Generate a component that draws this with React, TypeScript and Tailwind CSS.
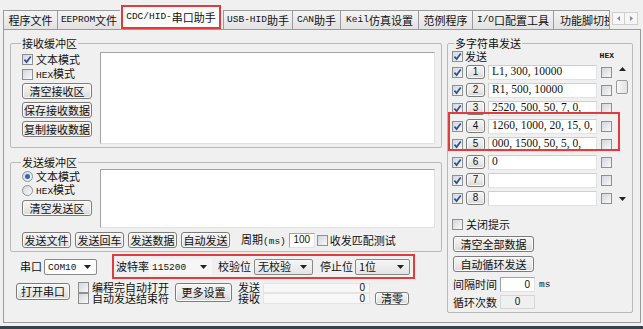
import React from "react";

// small latin text in the old bitmap-ish look
function L({ children, className = "" }: { children: React.ReactNode; className?: string }) {
  return <span className={`font-['Liberation_Mono',monospace] text-[9.5px] ${className}`}>{children}</span>;
}

function Check({ on = false, className = "" }: { on?: boolean; className?: string }) {
  return (
    <span
      className={`w-[11px] h-[11px] shrink-0 border border-[#8e8f8f] bg-linear-to-br from-[#d3d7dd] to-[#f8f8f8] flex items-center justify-center ${className}`}
    >
      {on && (
        <svg width="9" height="9" viewBox="0 0 9 9">
          <path d="M1.4 4.6 L3.6 7.1 L7.7 1.5" fill="none" stroke="#2b4f99" strokeWidth="1.7" />
        </svg>
      )}
    </span>
  );
}

function Radio({ on = false }: { on?: boolean }) {
  return (
    <span className="w-[11px] h-[11px] shrink-0 rounded-full border border-[#8e8f8f] bg-linear-to-br from-[#d3d7dd] to-[#fafafa] flex items-center justify-center">
      {on && <span className="w-[5px] h-[5px] rounded-full bg-[#2f63c4]" />}
    </span>
  );
}

function Btn({ children, className = "" }: { children: React.ReactNode; className?: string }) {
  return (
    <button
      className={`shrink-0 flex items-center justify-center border border-[#7c7c7c] rounded-[3px] bg-linear-to-b from-[#f5f5f5] via-[#ebebeb] to-[#d9d9d9] shadow-[inset_0_0_0_1px_#fbfbfb] leading-none text-[11px] text-[#111] ${className}`}
    >
      {children}
    </button>
  );
}

function Arrow() {
  return (
    <svg width="7" height="4" viewBox="0 0 7 4" className="shrink-0">
      <path d="M0 0 H7 L3.5 4 Z" fill="#222" />
    </svg>
  );
}

function Combo({ children, className = "", flat = false }: { children: React.ReactNode; className?: string; flat?: boolean }) {
  return (
    <div
      className={`shrink-0 h-[16px] flex items-center pl-[3px] pr-[5px] ${
        flat ? "bg-[#f6f6f6]" : "bg-linear-to-b from-[#f6f6f6] to-[#e4e4e4] border border-[#8a8a8a] rounded-[2px]"
      } ${className}`}
    >
      <span className="flex-1 leading-none">{children}</span>
      <Arrow />
    </div>
  );
}

function Tab({ children, className = "" }: { children: React.ReactNode; className?: string }) {
  return (
    <div
      className={`h-[19px] shrink-0 border-t border-l border-[#9b9b9b] bg-linear-to-b from-[#f4f4f4] to-[#e2e2e2] flex items-center justify-center leading-none ${className}`}
    >
      {children}
    </div>
  );
}

function Tabs() {
  return (
    <div className="h-[29px] shrink-0 flex items-end pl-[3px]">
      <Tab className="w-[54px]">程序文件</Tab>
      <Tab className="w-[63px]">
        <L>EEPROM</L>文件
      </Tab>
      <div className="ml-[1px] mr-[2px] w-[100px] h-[24px] shrink-0 border-2 border-[#e23b3b] bg-[#fbfbfb] flex items-center justify-center leading-none">
        <L>CDC/HID-</L>串口助手
      </div>
      <Tab className="w-[69px]">
        <L>USB-HID</L>助手
      </Tab>
      <Tab className="w-[48px]">
        <L>CAN</L>助手
      </Tab>
      <Tab className="w-[78px]">
        <L>Keil</L>仿真设置
      </Tab>
      <Tab className="w-[54px]">范例程序</Tab>
      <Tab className="w-[81px]">
        <L>I/O</L>口配置工具
      </Tab>
      <Tab className="w-[57px] border-r justify-start pl-[6px] overflow-hidden whitespace-nowrap">功能脚切换</Tab>
      <div className="ml-[2px] mb-[4px] flex">
        <div className="w-[13px] h-[13px] border border-[#cfcfcf] bg-[#f7f7f7] flex items-center justify-center">
          <svg width="3" height="5" viewBox="0 0 3 5">
            <path d="M3 0 V5 L0 2.5 Z" fill="#7d8aa6" />
          </svg>
        </div>
        <div className="w-[13px] h-[13px] border border-l-0 border-[#cfcfcf] bg-[#f7f7f7] flex items-center justify-center">
          <svg width="3" height="5" viewBox="0 0 3 5">
            <path d="M0 0 V5 L3 2.5 Z" fill="#7d8aa6" />
          </svg>
        </div>
      </div>
    </div>
  );
}

const box = "bg-white border border-t-[#a3a3a3] border-l-[#a3a3a3] border-r-[#e2e2e2] border-b-[#e2e2e2]";

function ReceiveGroup() {
  return (
    <fieldset className="border border-[#b9b9b9] rounded-[2px]">
      <legend className="ml-[10px] px-[1px] leading-[11px]">接收缓冲区</legend>
      <div className="flex pb-[3px] pr-[6px]">
        <div className="w-[89px] pl-[11px] flex flex-col">
          <div className="mt-[3px] h-[15px] flex items-center gap-[3px]">
            <Check on />
            <span>文本模式</span>
          </div>
          <div className="h-[15px] flex items-center gap-[3px]">
            <Check />
            <span>
              <L>HEX</L>模式
            </span>
          </div>
          <Btn className="mt-[1px] w-[70px] h-[16px]">清空接收区</Btn>
          <Btn className="mt-[3px] w-[70px] h-[16px]">保存接收数据</Btn>
          <Btn className="mt-[3px] w-[70px] h-[16px]">复制接收数据</Btn>
        </div>
        <div className={`mt-[3px] w-[335px] h-[92px] ${box}`} />
      </div>
    </fieldset>
  );
}

function SendGroup() {
  return (
    <fieldset className="mt-[9px] border border-[#b9b9b9] rounded-[2px]">
      <legend className="ml-[10px] px-[1px] leading-[11px]">发送缓冲区</legend>
      <div className="flex flex-col pb-[3px]">
        <div className="flex pr-[6px]">
          <div className="w-[89px] pl-[11px] flex flex-col">
            <div className="mt-[1px] h-[14px] flex items-center gap-[3px]">
              <Radio on />
              <span>文本模式</span>
            </div>
            <div className="h-[14px] flex items-center gap-[3px]">
              <Radio />
              <span>
                <L>HEX</L>模式
              </span>
            </div>
            <Btn className="mt-[3px] w-[70px] h-[16px]">清空发送区</Btn>
          </div>
          <div className={`mt-[1px] w-[335px] h-[59px] ${box}`} />
        </div>
        <div className="mt-[4px] h-[16px] pl-[11px] flex items-center">
          <Btn className="w-[49px] h-[16px]">发送文件</Btn>
          <Btn className="ml-[4px] w-[49px] h-[16px]">发送回车</Btn>
          <Btn className="ml-[4px] w-[49px] h-[16px]">发送数据</Btn>
          <Btn className="ml-[4px] w-[49px] h-[16px]">自动发送</Btn>
          <span className="ml-[11px]">
            周期<L className="text-[8.5px]">(ms)</L>
          </span>
          <div className={`ml-[3px] w-[26px] h-[15px] flex items-center justify-center ${box}`}>
            <span className="font-['Liberation_Sans',sans-serif] text-[10px] leading-none">100</span>
          </div>
          <Check className="ml-[2px]" />
          <span className="ml-[2px]">收发匹配测试</span>
        </div>
      </div>
    </fieldset>
  );
}

function PortRows() {
  return (
    <div className="flex flex-col">
      <div className="mt-[2px] h-[25px] flex items-center">
        <span className="ml-[10px]">串口</span>
        <Combo className="ml-[2px] w-[53px] bg-none bg-white">
          <L>COM10</L>
        </Combo>
        <div className="ml-[15px] w-[303px] h-[25px] shrink-0 border-2 border-[#e23b3b] flex items-center pl-[2px]">
          <span>波特率</span>
          <Combo flat className="w-[63px]">
            <L>115200</L>
          </Combo>
          <span className="ml-[6px]">校验位</span>
          <Combo className="ml-[3px] w-[59px]">无校验</Combo>
          <span className="ml-[7px]">停止位</span>
          <Combo className="ml-[2px] w-[55px]">1位</Combo>
        </div>
      </div>
      <div className="mt-[3px] flex items-start">
        <Btn className="ml-[6px] mt-[1px] w-[54px] h-[17px]">打开串口</Btn>
        <div className="ml-[8px] flex flex-col">
          <div className="h-[11px] flex items-center gap-[3px]">
            <Check className="w-[10px] h-[10px]" />
            <span className="leading-[11px]">编程完自动打开</span>
          </div>
          <div className="h-[11px] flex items-center gap-[3px]">
            <Check className="w-[10px] h-[10px]" />
            <span className="leading-[11px]">自动发送结束符</span>
          </div>
        </div>
        <Btn className="ml-[6px] mt-[1px] w-[57px] h-[19px]">更多设置</Btn>
        <div className="ml-[6px] flex flex-col">
          <div className="h-[11px] flex items-center">
            <span className="w-[25px] leading-[11px]">发送</span>
            <div className="w-[107px] h-[10px] bg-[#f7f7f7] border border-[#e4e4e4] flex items-center justify-end pr-[4px]">
              <span className="font-['Liberation_Sans',sans-serif] text-[10px] leading-none">0</span>
            </div>
          </div>
          <div className="h-[11px] flex items-center">
            <span className="w-[25px] leading-[11px]">接收</span>
            <div className="w-[107px] h-[11px] bg-[#f7f7f7] border border-[#e4e4e4] flex items-center justify-end pr-[4px]">
              <span className="font-['Liberation_Sans',sans-serif] text-[10px] leading-none">0</span>
            </div>
            <Btn className="ml-[5px] w-[34px] h-[13px]">清零</Btn>
          </div>
        </div>
      </div>
    </div>
  );
}

const strings = [
  "L1, 300, 10000",
  "R1, 500, 10000",
  "2520, 500, 50, 7, 0,",
  "1260, 1000, 20, 15, 0,",
  "000, 1500, 50, 5, 0,",
  "0",
  "",
  "",
];

function MultiGroup() {
  return (
    <fieldset className="ml-[5px] w-[186px] self-start border border-[#b9b9b9] rounded-[2px]">
      <legend className="ml-[6px] px-[1px] leading-[11px]">多字符串发送</legend>
      <div className="flex flex-col pb-[3px]">
        <div className="mt-[1px] h-[12px] pl-[4px] pr-[18px] flex items-center">
          <Check on />
          <span className="ml-[2px] leading-[11px]">发送</span>
          <span className="ml-auto font-['Liberation_Mono',monospace] font-bold text-[8px] leading-none">HEX</span>
        </div>
        <div className="relative mt-[1px] pl-[4px] flex">
          <div className="flex flex-col">
            {strings.map((s, i) => (
              <div key={i} className="h-[18px] flex items-center">
                <Check on />
                <Btn className="ml-[3px] w-[19px] h-[14px]">
                  <span className="font-['Liberation_Sans',sans-serif] text-[10px]">{i + 1}</span>
                </Btn>
                <div className={`ml-[3px] w-[109px] h-[15px] flex items-center pl-[3px] ${box} border-t-[#cfcfcf] border-l-[#cfcfcf]`}>
                  <span className="font-['Liberation_Serif',serif] text-[11.5px] leading-none whitespace-nowrap">{s}</span>
                </div>
                <Check className="ml-[4px]" />
              </div>
            ))}
          </div>
          <div className="ml-[4px] w-[12px] h-[144px] flex flex-col items-center">
            <svg width="7" height="4" viewBox="0 0 7 4" className="mt-[4px]">
              <path d="M0 4 H7 L3.5 0 Z" fill="#222" />
            </svg>
            <div className="mt-[9px] w-[12px] h-[14px] border border-[#9a9a9a] rounded-[2px] bg-linear-to-r from-[#f6f6f6] to-[#e2e2e2]" />
            <div className="flex-1" />
            <svg width="7" height="4" viewBox="0 0 7 4" className="mb-[6px]">
              <path d="M0 0 H7 L3.5 4 Z" fill="#222" />
            </svg>
          </div>
          <div className="absolute left-0 top-[49px] w-[172px] h-[39px] border-2 border-[#e23b3b] pointer-events-none" />
        </div>
        <div className="mt-[11px] h-[12px] pl-[4px] flex items-center gap-[3px]">
          <Check />
          <span>关闭提示</span>
        </div>
        <Btn className="ml-[5px] mt-[6px] w-[81px] h-[16px]">清空全部数据</Btn>
        <Btn className="ml-[5px] mt-[4px] w-[81px] h-[16px]">自动循环发送</Btn>
        <div className="mt-[5px] h-[15px] pl-[5px] flex items-center">
          <span className="w-[44px]">间隔时间</span>
          <div className={`ml-[3px] w-[35px] h-[15px] flex items-center justify-end pr-[4px] ${box}`}>
            <span className="font-['Liberation_Sans',sans-serif] text-[10px] leading-none">0</span>
          </div>
          <L className="ml-[4px] text-[8.5px]">ms</L>
        </div>
        <div className="mt-[3px] h-[14px] pl-[5px] flex items-center">
          <span className="w-[44px]">循环次数</span>
          <div className="ml-[3px] w-[35px] h-[14px] flex items-center justify-center bg-[#f0f0f0] border border-[#d6d6d6]">
            <span className="font-['Liberation_Sans',sans-serif] text-[10px] leading-none">0</span>
          </div>
        </div>
      </div>
    </fieldset>
  );
}

export default function App() {
  return (
    <div className="w-[643px] h-[329px] bg-[#f0f0f0] overflow-hidden flex flex-col text-[11px] leading-[13px] text-[#111] font-['Noto_Sans_CJK_SC',sans-serif]">
      <Tabs />
      <div className="ml-[3px] w-[638px] h-[294px] shrink-0 border border-[#9b9b9b] bg-[#f0f0f0] flex items-start pl-[6px] pt-[8px]">
        <div className="w-[432px] shrink-0 flex flex-col">
          <ReceiveGroup />
          <SendGroup />
          <PortRows />
        </div>
        <MultiGroup />
      </div>
      <div className="mt-auto h-[3px] bg-[#38414c]" />
    </div>
  );
}
